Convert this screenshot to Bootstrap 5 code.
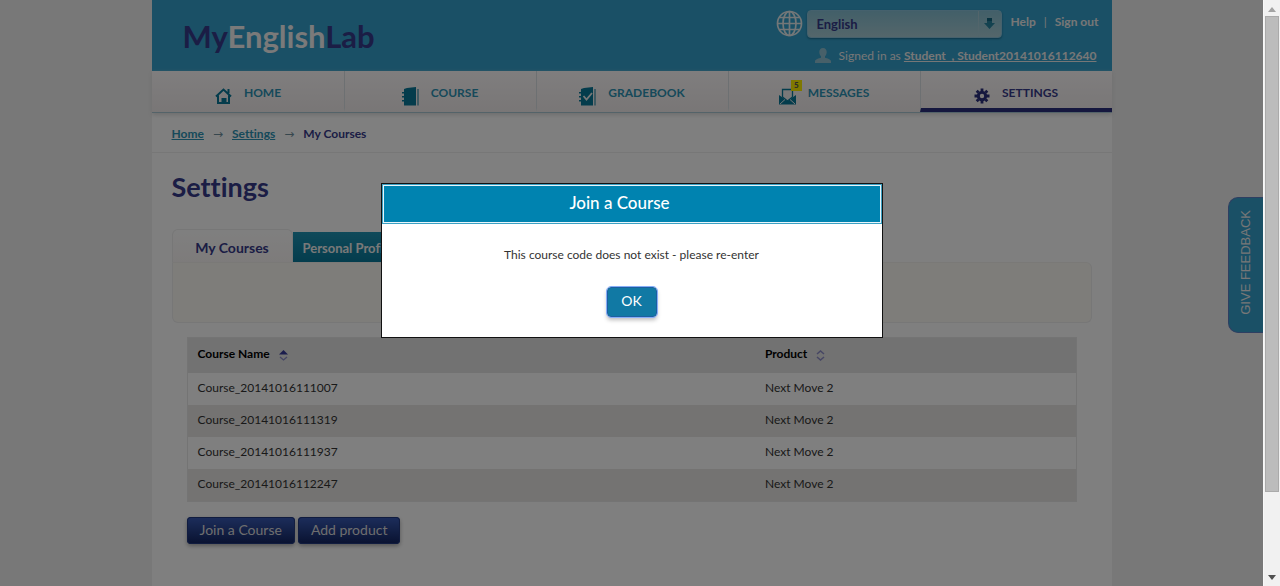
<!DOCTYPE html>
<html lang="en">
<head>
<meta charset="utf-8">
<meta name="viewport" content="width=device-width, initial-scale=1">
<title>MyEnglishLab - Settings</title>
<link href="https://cdn.jsdelivr.net/npm/bootstrap@5.3.0/dist/css/bootstrap.min.css" rel="stylesheet">
<style>
:root { --sky: #34a0cc; --teal: #2c93b4; --navy: #363a8a; --bar: 17px; }
html, body { height: 100%; }
body { font: 12px/16px Lato, sans-serif; font-variant-ligatures: none; color: #333; background: #f0f0f0; overflow: hidden; }
.sheet { max-width: 960px; min-height: 100vh; background: #fff; }
.page-wrap { padding-right: var(--bar); }

.masthead { background: var(--sky); height: 71px; padding: 10px 13px 0 31px; color: #eee; }
.masthead a { color: #eee; text-decoration-skip-ink: none; }
.brand { font-size: 31px; line-height: 40px; font-weight: 700; color: var(--navy) !important; padding-top: 6px; }
.brand span { color: #f4f4f4; }
.lang { width: 195px; height: 28px; }
.lang select { width: 100%; height: 28px; border: 1px solid #8ac3da; border-radius: 4px; padding: 0 8px; font-size: 13px; font-weight: 700; color: var(--navy); appearance: none; background: linear-gradient(#85bfd2, #a9cdd6); box-shadow: 0 1px 2px #1c6d90; }
.lang svg { position: absolute; right: 7px; top: 8px; pointer-events: none; }
.lang::after { content: ""; position: absolute; right: 23px; top: 1px; height: 26px; border-left: 1px solid #a4cbd6; }
.signed { padding: 10px 2px 0 0; }

.mainnav { border-bottom: 1px solid #a9c6d2; box-shadow: 0 2px 4px #ddd; background: linear-gradient(#fffcfd, #f2eded); }
.mainnav .nav-link { height: 41px; padding: 0; gap: 12px; font-size: 12px; font-weight: 700; color: var(--teal); border-left: 1px solid #dae1e5; border-radius: 0; border-bottom: 4px solid transparent; }
.mainnav li:first-child .nav-link { border-left-color: transparent; }
.mainnav .nav-link.active { color: var(--navy); border-bottom-color: #2b2f7c; }
.mainnav .nav-link > span { padding-top: 6px; }
.glyph { padding-top: 13px; display: flex; position: relative; }
.unread { position: absolute; left: 12px; top: 5px; width: 11px; height: 11px; font-size: 8px; line-height: 11px; text-align: center; background: #fff000; color: #555; }

.crumbs { --bs-breadcrumb-divider: "→"; padding: 13px 20px 10px; border-bottom: 1px solid #eee; font-weight: 700; margin: 0; }
.crumbs a { color: var(--teal); }
.crumbs .breadcrumb-item + .breadcrumb-item { padding-left: 9px; }
.crumbs .breadcrumb-item + .breadcrumb-item::before { font-family: "DejaVu Sans", sans-serif; font-weight: 400; font-size: 12px; color: #6f8f9c; padding-right: 9px; }
.crumbs .active { color: var(--navy); }

.content { padding: 16px 20px 40px; }
h1 { font-size: 27px; line-height: 36px; font-weight: 700; color: var(--navy); margin-bottom: 24px; }
.tabset { border: 0; }
.tabset .nav-link { font-size: 14px; line-height: 18px; font-weight: 700; margin: 0; }
.tabset .nav-link.active { width: 121px; height: 33px; padding: 9px 0 0; color: var(--navy); background: linear-gradient(#fff, #fbf7f6); border: 1px solid #eee; border-bottom: 0; border-radius: 6px 6px 0 0; }
.tabset .nav-link:not(.active) { height: 30px; padding: 7px 10px 0; font-size: 13px; color: #f2f2f2; background: linear-gradient(#1f94b4, #08799a); border: 0; border-radius: 0; }
.tabpanel { height: 61px; background: #fcfaf5; border: 1px solid #eee; border-top-color: #f4f2ee; border-radius: 0 6px 6px 6px; border-top-left-radius: 0; }
.inner { padding: 14px 15px 0; }

.courses { border: 1px solid #e8e8e8; margin-bottom: 15px; }
.courses > :not(caption) > * > * { padding: 7px 9px 9px; border: 0; color: #333; }
.courses > thead > tr > th { background: #e4e4e4; color: #000; padding: 8px 9px 11px; }
.courses > tbody > tr:nth-child(even) > td { background: #e9e7e4; }
.courses th:first-child { width: 64%; }
.courses > :not(caption) > * > :first-child { padding-left: 10px; }
.courses svg { margin-left: 6px; vertical-align: -3px; }

.actions { gap: 3px; }
.btn-navy { font-size: 14px; line-height: 18px; padding: 4px 13px 5px; color: #ddd; border: 0; border-radius: 4px; background: linear-gradient(#3a5cb8, #122460); box-shadow: inset 0 0 0 1px #22397f, 0 2px 4px #aaa; }

.feedback { position: fixed; right: var(--bar); top: 197px; width: 35px; height: 136px; padding: 0; border: 1px solid #5c7ec4; border-right: 0; border-radius: 10px 0 0 10px; background: var(--sky); color: #eee; font: 13px/18px "Liberation Sans", sans-serif; }
.feedback span { writing-mode: vertical-rl; transform: rotate(180deg); display: inline-block; }

.veil { display: block; width: auto; right: var(--bar); background: rgba(0, 0, 0, .5); overflow: hidden; }
.veil .modal-dialog { width: 502px; max-width: 100%; margin: 183px auto 0; }
.veil .modal-content { border: 1px solid #111; border-radius: 0; }
.veil .modal-header { padding: 8px 34px 10px 10px; background: #0083b0; color: #fff; border: 1px solid #3ba1c4; outline: 1px solid #e8f5fa; outline-offset: -2px; border-radius: 0; height: 40px; }
.veil .modal-title { font-size: 17px; line-height: 20px; font-weight: 500; }
.veil .modal-body { padding: 23px 20px 20px; color: #333; }
.btn-ok { width: 50px; height: 30px; padding: 0 0 3px; font-size: 14px; color: #fff; background: #1179a4 !important; border: 1px solid #1d5fa0; border-radius: 4px; outline: 1px solid #86aef8; outline-offset: 0; box-shadow: 0 3px 4px #bbb; margin-top: 24px; }

.rail { position: fixed; right: 0; top: 0; bottom: 0; width: var(--bar); background: #f1f1f1; z-index: 1060; padding: 7px 0 6px; border-left: 1px solid #f8f8f8; }
.thumb { width: 14px; height: 83%; background: #bcbcbc; border: 1px solid #aaa; }
</style>
</head>
<body>
<div class="page-wrap">
<div class="sheet mx-auto">
  <header class="masthead d-flex justify-content-between">
    <a class="brand text-decoration-none" href="#">My<span>English</span>Lab</a>
    <div class="d-flex flex-column align-items-end">
      <div class="d-flex align-items-start">
        <svg width="27" height="27" viewBox="0 0 27 27" fill="none" stroke="#e6eef0" stroke-width="1.7" class="me-1" aria-hidden="true"><circle cx="13.500" cy="13.500" r="12"/><ellipse cx="13.500" cy="13.500" rx="6.500" ry="12"/><path d="M13.500 1.500v24M1.500 13.500h24M3.500 7.500h20M3.500 19.500h20"/></svg>
        <div class="lang position-relative">
          <select aria-label="Language"><option>English</option></select>
          <svg width="11" height="12" viewBox="0 0 11 12" aria-hidden="true"><path d="M3 0h5v5h3L5.500 11 0 5h3z" fill="#2684a0"/><path d="M3 0h5v3H3z" fill="#116683"/></svg>
        </div>
        <div class="d-flex gap-2 ps-2 pt-1 fw-bold">
          <a class="text-decoration-none" href="#">Help</a><span class="fw-normal">|</span><a class="text-decoration-none" href="#">Sign out</a>
        </div>
      </div>
      <div class="signed d-flex align-items-center">
        <svg width="16" height="16" viewBox="0 0 16 16" fill="#8fc0d2" class="me-2" aria-hidden="true"><path d="M8 0c2.500 0 3.700 1.700 3.700 4 0 1.900-.8 3.200-1.700 4.200v1.600c2 .8 6 1.200 6 3.700V15H0v-1.500c0-2.500 4-2.900 6-3.700V8.200C5.100 7.200 4.300 5.900 4.300 4 4.300 1.700 5.500 0 8 0z"/></svg>
        <span>Signed in as <a class="fw-bold" href="#">Student_, Student20141016112640</a></span>
      </div>
    </div>
  </header>

  <nav class="mainnav" aria-label="Main">
    <ul class="nav nav-fill row row-cols-5 g-0">
      <li class="nav-item"><a class="nav-link d-flex align-items-center justify-content-center" href="#"><i class="glyph"><svg width="17" height="16" viewBox="0 0 17 16" fill="none" stroke="#087898" stroke-width="2"><path d="M1 8.500 8.500 1.500 16 8.500M3 7.500V15h11V7.500M13.500 1v4"/><path d="M7.500 15v-4h3v4" fill="#087898"/></svg></i><span>HOME</span></a></li>
      <li class="nav-item"><a class="nav-link d-flex align-items-center justify-content-center" href="#"><i class="glyph"><svg width="17" height="19" viewBox="0 0 17 19" fill="#087898"><path d="M2 2 5 1l9-1v18.500H2z"/><path d="M15.500 2h1v16.500h-1zM0 5h3v1.500H0zM0 9h3v1.500H0zM0 13h3v1.500H0z"/></svg></i><span>COURSE</span></a></li>
      <li class="nav-item"><a class="nav-link d-flex align-items-center justify-content-center" href="#"><i class="glyph"><svg width="17" height="19" viewBox="0 0 17 19" fill="#087898"><path d="M2 2 5 1l9-1v18.500H2z"/><path d="M15.500 2h1v16.500h-1zM0 5h3v1.500H0zM0 9h3v1.500H0zM0 13h3v1.500H0z"/><path d="m4.500 9 3 3.500L13 6" fill="none" stroke="#eee" stroke-width="1.800"/></svg></i><span>GRADEBOOK</span></a></li>
      <li class="nav-item"><a class="nav-link d-flex align-items-center justify-content-center" href="#"><i class="glyph"><svg width="17" height="17" viewBox="0 0 17 17"><path d="M0 7v9.500h17V7l-8.500 6z" fill="#087898"/><path d="M3.500 9V1.500h10V9l-5 4z" fill="#f3f0f0" stroke="#087898" stroke-width="1.300"/><path d="m1 16 5-4.500M16 16l-5-4.500" stroke="#eee" stroke-width="1"/></svg><b class="unread fst-normal">5</b></i><span>MESSAGES</span></a></li>
      <li class="nav-item"><a class="nav-link active d-flex align-items-center justify-content-center" aria-current="page" href="#"><i class="glyph"><svg width="16" height="16" viewBox="0 0 16 16" stroke="#2b2f7c" fill="none"><circle cx="8" cy="8" r="3.700" stroke-width="3"/><path d="M8 .5V3M8 13v2.500M.5 8H3M13 8h2.500M2.700 2.700l1.800 1.800M11.500 11.500l1.800 1.800M13.300 2.700l-1.800 1.800M4.500 11.500l-1.800 1.800" stroke-width="2.800"/></svg></i><span>SETTINGS</span></a></li>
    </ul>
  </nav>

  <nav aria-label="Breadcrumb">
    <ol class="breadcrumb crumbs">
      <li class="breadcrumb-item"><a href="#">Home</a></li>
      <li class="breadcrumb-item"><a href="#">Settings</a></li>
      <li class="breadcrumb-item active" aria-current="page">My Courses</li>
    </ol>
  </nav>

  <main class="content">
    <h1>Settings</h1>
    <ul class="nav nav-tabs tabset align-items-end">
      <li class="nav-item"><a class="nav-link active text-center" href="#">My Courses</a></li>
      <li class="nav-item"><a class="nav-link" href="#">Personal Profile</a></li>
    </ul>
    <div class="tabpanel"></div>
    <div class="inner">
      <table class="table courses">
        <thead><tr>
          <th scope="col">Course Name <svg width="9" height="11" viewBox="0 0 9 11"><path d="M0 4.500 4.500 0 9 4.500z" fill="#363a9a"/><path d="m1 7 3.500 3L8 7" fill="none" stroke="#8c8cc8" stroke-width="1.300"/></svg></th>
          <th scope="col">Product <svg width="9" height="11" viewBox="0 0 9 11" fill="none" stroke="#8c8cc8" stroke-width="1.500"><path d="m1 4 3.500-3L8 4M1 7l3.500 3L8 7"/></svg></th>
        </tr></thead>
        <tbody>
          <tr><td>Course_20141016111007</td><td>Next Move 2</td></tr>
          <tr><td>Course_20141016111319</td><td>Next Move 2</td></tr>
          <tr><td>Course_20141016111937</td><td>Next Move 2</td></tr>
          <tr><td>Course_20141016112247</td><td>Next Move 2</td></tr>
        </tbody>
      </table>
      <div class="d-flex actions">
        <button type="button" class="btn btn-navy">Join a Course</button>
        <button type="button" class="btn btn-navy">Add product</button>
      </div>
    </div>
  </main>
</div>
</div>

<button type="button" class="feedback"><span>GIVE FEEDBACK</span></button>

<div class="modal veil" role="dialog" aria-modal="true" aria-labelledby="joinTitle">
  <div class="modal-dialog">
    <div class="modal-content">
      <div class="modal-header justify-content-center"><h2 class="modal-title" id="joinTitle">Join a Course</h2></div>
      <div class="modal-body text-center">
        <div>This course code does not exist - please re-enter</div>
        <button type="button" class="btn btn-ok">OK</button>
      </div>
    </div>
  </div>
</div>

<div class="rail d-flex flex-column align-items-center" aria-hidden="true">
  <svg width="8" height="5" viewBox="0 0 8 5" class="mb-1 flex-shrink-0"><path d="M0 5 4 0l4 5z" fill="#a3a3a3"/></svg>
  <div class="thumb"></div>
  <svg width="8" height="5" viewBox="0 0 8 5" class="mt-auto flex-shrink-0"><path d="m0 0 4 5 4-5z" fill="#505050"/></svg>
</div>
<script src="https://cdn.jsdelivr.net/npm/bootstrap@5.3.0/dist/js/bootstrap.bundle.min.js"></script>
</body>
</html>
